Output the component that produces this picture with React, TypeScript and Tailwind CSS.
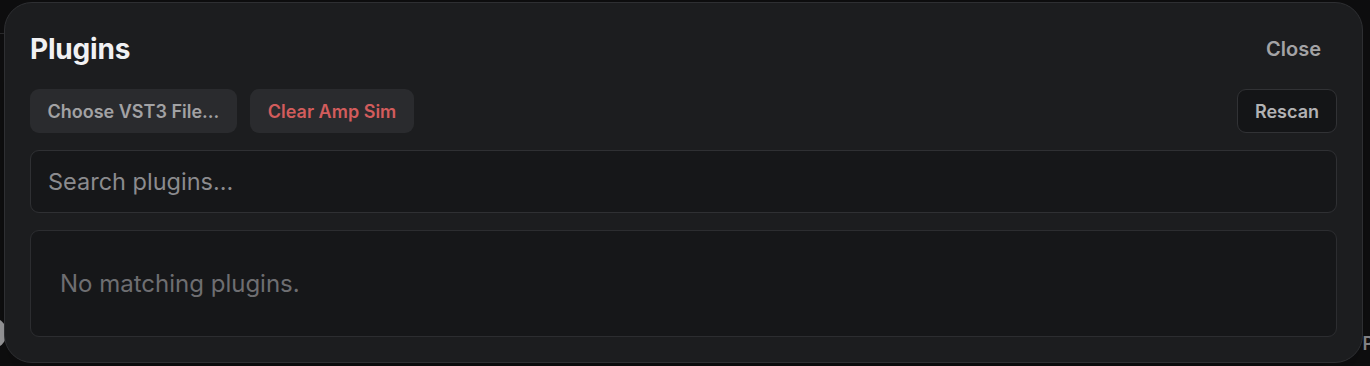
import React from "react";

export default function App() {
  return (
    <div
      className="relative h-[366px] w-[1370px] overflow-hidden bg-[#0e0e0f]"
      style={{ fontFamily: "Inter, 'Noto Sans', sans-serif" }}
    >
      {/* stuff behind the dialog */}
      <div className="absolute left-0 top-[33px] h-px w-[6px] bg-[#2a2a2c]" />
      <div className="absolute left-[-20px] top-[318px] h-[30px] w-[26px] rounded-full bg-[#9a9a9c]" />
      <div className="absolute right-[-4px] top-[330px] text-[18px] font-semibold text-[#8a8a8c]">P</div>

      {/* dialog */}
      <div className="relative ml-[4px] mt-[2px] flex h-[361px] w-[1359px] flex-col rounded-[28px] border border-[#2e2f32] bg-[#1c1d1f] px-[25px] pb-[24px] pt-[24px] shadow-2xl">
        <div className="mb-[18px] flex h-[44px] items-center justify-between">
          <h2 className="text-[28px] font-bold tracking-[-0.2px] text-[#f1f1f3]">Plugins</h2>
          <button className="h-[44px] pl-4 pr-[16px] text-[20px] font-semibold text-[#a3a3a5]">Close</button>
        </div>

        <div className="mb-[17px] flex h-[44px] items-center">
          <button className="h-[44px] rounded-[9px] bg-[#2a2b2e] px-[17.5px] text-[18px] font-semibold text-[#a2a2a4]">
            Choose VST3 File...
          </button>
          <button className="ml-[13px] h-[44px] rounded-[9px] bg-[#2a2b2e] px-[18px] text-[18px] font-semibold text-[#d25c5c]">
            Clear Amp Sim
          </button>
          <button className="ml-auto h-[44px] rounded-[9px] border border-[#313235] bg-[#141517] px-[17px] text-[18px] font-semibold text-[#b2b2b4]">
            Rescan
          </button>
        </div>

        <input
          type="text"
          placeholder="Search plugins..."
          className="mb-[17px] h-[63px] w-full rounded-[9px] border border-[#2f3033] bg-[#161719] px-[17px] text-[23.5px] text-[#e0e0e2] placeholder:text-[#8b8b8e] focus:outline-none"
        />

        <div className="flex h-[107px] items-center rounded-[9px] border border-[#2c2d30] bg-[#161719] px-[29px]">
          <span className="text-[24px] text-[#6e6e71]">No matching plugins.</span>
        </div>
      </div>
    </div>
  );
}
